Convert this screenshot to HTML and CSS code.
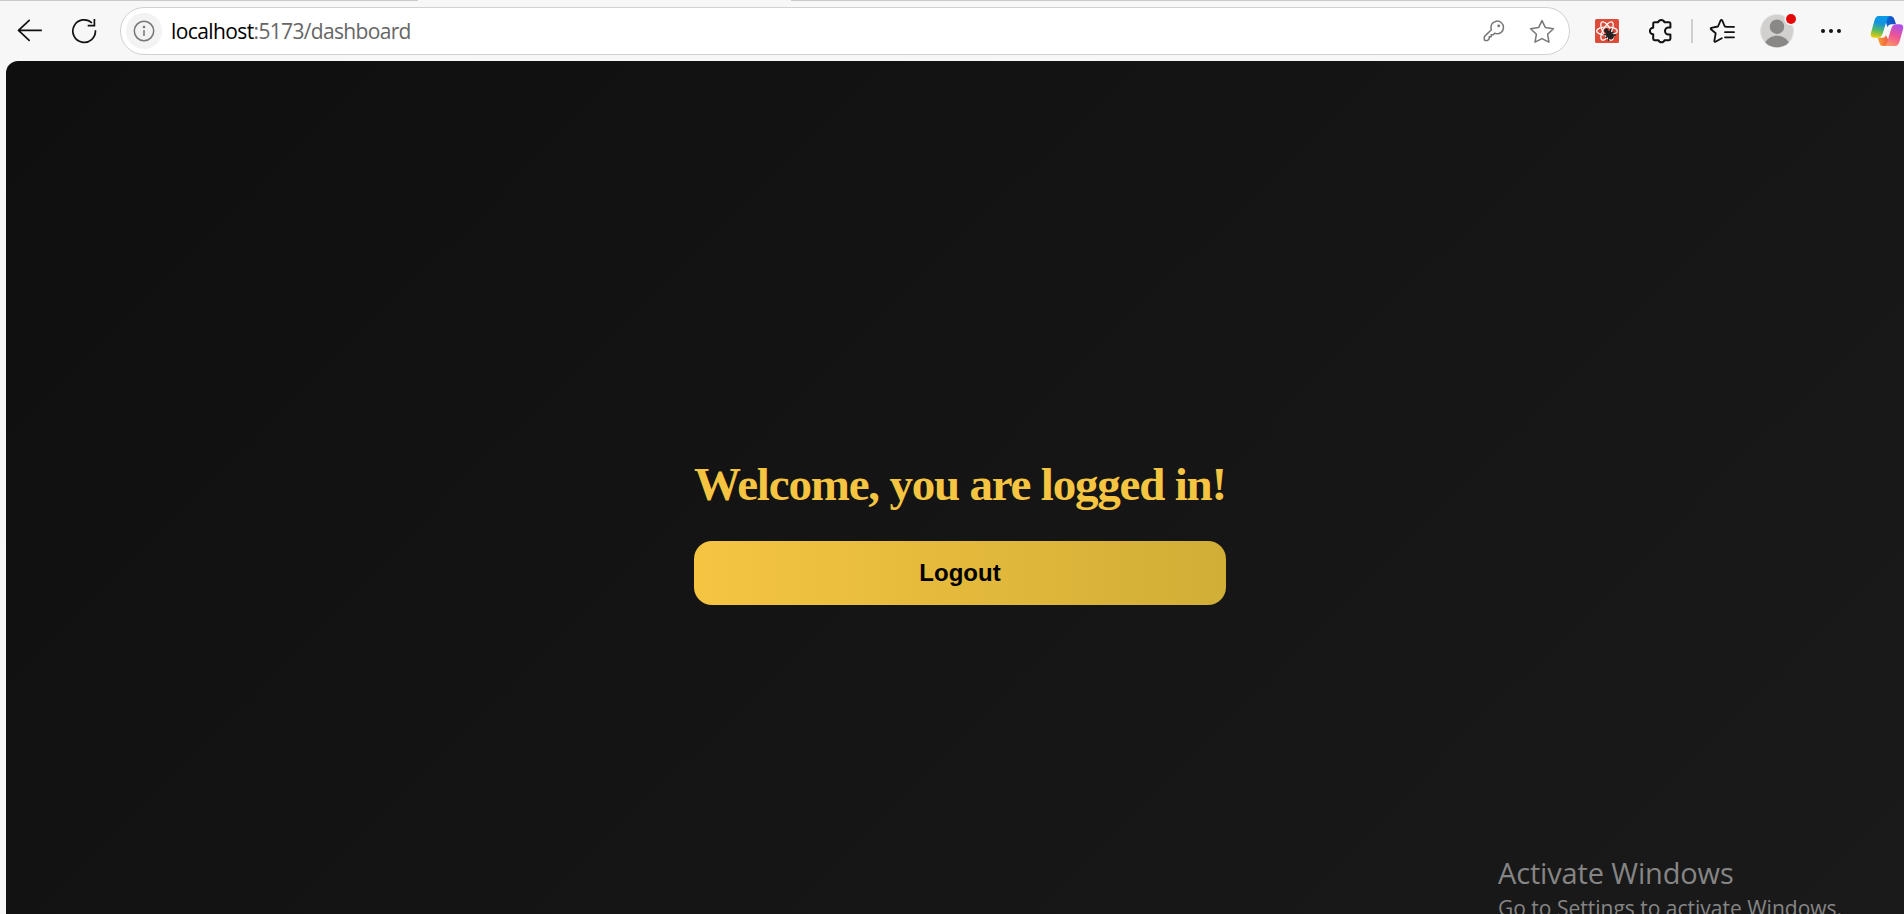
FILE: index.html
```html
<!DOCTYPE html>
<html lang="en">
<head>
<meta charset="utf-8">
<title>Dashboard</title>
<link rel="stylesheet" href="styles.css">
</head>
<body>
<header class="toolbar">
  <div class="tab-edge"><span class="edge-left"></span><span class="edge-right"></span></div>
  <div class="bar">
    <svg class="icon back" width="26" height="24" viewBox="0 0 26 24"><path d="M24.2 11.4H1.8M12.2 1.4 1.5 11.4 12.2 21.4"/></svg>
    <svg class="icon reload" width="26" height="26" viewBox="0 0 26 26"><path d="M24.4 12.2A11.3 11.3 0 1 1 21 5M23.4 1v6.7h-6.7"/></svg>
    <div class="address">
      <span class="info"><svg width="22" height="22" viewBox="0 0 22 22"><circle cx="11" cy="11" r="9.7"/><path d="M11 10v6"/><circle class="info-dot" cx="11" cy="7" r="1.3"/></svg></span>
      <span class="url"><span class="host">localhost</span><span class="path">:5173/dashboard</span></span>
      <svg class="key" width="22" height="22" viewBox="0 0 22 22"><path d="M8.1 9.1A6.3 6.3 0 1 1 13 13.6L11.6 13.3 10.2 14.7H8.2V16.7H6.2V18.7L5 20.1Q4.6 20.5 4 20.5H2.2Q1.3 20.5 1.3 19.5V17.1Q1.3 16.5 1.8 16.1L8.4 9.7Z"/><circle class="key-dot" cx="15.7" cy="5.9" r="1.4"/></svg>
      <svg class="star" width="26" height="25" viewBox="0 0 26 25"><path d="M13 1.6 16.4 8.6 24.4 9.8 18.6 15.3 20 23.2 13 19.6 6 23.2 7.4 15.3 1.6 9.8 9.6 8.6Z"/></svg>
    </div>
    <svg class="extension" width="24" height="24" viewBox="0 0 24 24">
      <rect width="24" height="24" rx="1.5" fill="#dd4b39"/>
      <g fill="none" stroke="#fff" stroke-width="1.2"><ellipse cx="12" cy="12" rx="10.3" ry="4"/><ellipse cx="12" cy="12" rx="10.3" ry="4" transform="rotate(60 12 12)"/><ellipse cx="12" cy="12" rx="10.3" ry="4" transform="rotate(120 12 12)"/></g>
      <g transform="rotate(-38 14 15)"><ellipse cx="14" cy="16.4" rx="3.2" ry="4.6" fill="#222"/><circle cx="14" cy="10.6" r="2.2" fill="#222"/><path d="M9.2 12l9.6 8M18.8 12l-9.6 8M9 16h10" stroke="#222" stroke-width="1.4"/></g>
    </svg>
    <svg class="icon puzzle" width="24" height="26" viewBox="0 0 24 26"><path d="M4.2 5.6Q4.2 4.2 5.6 4.2H9.2A3.3 3.3 0 0 1 15.4 4.2H20Q21.4 4.2 21.4 5.6V9.5H19.5A3.5 3.5 0 0 0 19.5 16.5H21.4V20.8Q21.4 22.2 20 22.2H15.6A3.3 3.3 0 0 1 9.4 22.2H5.6Q4.2 22.2 4.2 20.8V16.3A3.3 3.3 0 0 1 4.2 9.7Z"/></svg>
    <span class="divider"></span>
    <svg class="icon favorites" width="26" height="26" viewBox="0 0 26 26"><path d="M17 8.7 15.8 8.5 13.4 2.8Q12.4 1 11.4 2.8L9 8.5 2.3 9.8Q1.2 10.2 2 11.2L6.7 15.3 5.3 23Q5.4 24.2 6.5 23.7L12.8 20.2M17.7 8.9H25M16 14.2H25M16 19.3H25"/></svg>
    <div class="avatar">
      <svg width="34" height="34" viewBox="0 0 34 34"><circle cx="17" cy="17" r="16.5" fill="#d2d0ce" stroke="#e3e2e0"/><circle cx="17" cy="12.7" r="7.2" fill="#8a8886"/><path d="M5.2 28.4C10 19.4 24 19.4 28.8 28.4A16.5 16.5 0 0 1 5.2 28.4Z" fill="#8a8886"/></svg>
      <span class="alert"></span>
    </div>
    <div class="more"><i></i><i></i><i></i></div>
    <svg class="copilot" width="34" height="32" viewBox="0 0 34 32">
      <defs>
        <linearGradient id="cool" x1=".45" y1="0" x2=".25" y2="1"><stop offset="0" stop-color="#079be7"/><stop offset=".32" stop-color="#1692dc"/><stop offset=".65" stop-color="#55b966"/><stop offset="1" stop-color="#f1cd00"/></linearGradient>
        <linearGradient id="warm" x1=".7" y1="0" x2=".3" y2="1"><stop offset="0" stop-color="#a950ec"/><stop offset=".5" stop-color="#ee5495"/><stop offset="1" stop-color="#fb9565"/></linearGradient>
        <linearGradient id="fold"><stop offset="0" stop-color="#0a70de"/><stop offset="1" stop-color="#1748bd"/></linearGradient>
        <linearGradient id="fire"><stop offset="0" stop-color="#f7a32d"/><stop offset="1" stop-color="#ee4650"/></linearGradient>
      </defs>
      <path d="M14 1H20Q23.5 1 24.6 5L26 9.3H21Q18.5 9.3 17.4 12Z" fill="url(#fold)"/>
      <path d="M21 31H13Q10 31 9 26.8L7.8 22.8H13Q15.3 22.8 16 20Z" fill="url(#fire)"/>
      <path d="M8.5 1H20.5Q18.1 1 17 4.5L12.8 18.3Q11.4 22.8 7.5 22.8H4.5Q-.5 22.8 1.3 16.8L4.3 6Q5.7 1 8.5 1Z" fill="url(#cool)"/>
      <path d="M25.5 31H13Q15.9 31 17 27.5L21.2 13.7Q22.6 9.3 26.5 9.3H29.5Q34.5 9.3 32.7 15.2L29.7 26Q28.3 31 25.5 31Z" fill="url(#warm)"/>
    </svg>
  </div>
</header>
<main class="page">
  <section class="dashboard">
    <h1 class="welcome">Welcome, you are logged in!</h1>
    <button class="logout">Logout</button>
  </section>
</main>
<aside class="watermark"><div class="activate">Activate Windows</div><div class="settings">Go to Settings to activate Windows.</div></aside>
</body>
</html>
```
FILE: styles.css
```css
* { box-sizing: border-box; }
body { margin: 0; height: 914px; overflow: hidden; background: #f7f7f7; position: relative; }
.toolbar { height: 61px; }
.tab-edge { height: 1px; display: flex; justify-content: space-between; }
.edge-left { width: 418px; background: #cacaca; }
.edge-right { width: 1113px; background: #cacaca; }
.bar { height: 60px; display: flex; align-items: center; padding-left: 17px; }
.bar > * { flex: none; }
.icon { fill: none; stroke: #111; stroke-width: 1.7; stroke-linecap: round; stroke-linejoin: round; }
.reload { margin-left: 28px; stroke-linecap: butt; stroke-linejoin: miter; }
.address { width: 1450px; height: 48px; margin-left: 23px; border: 1.5px solid #d1d1d1; border-radius: 24px; background: #fff; display: flex; align-items: center; padding-left: 5px; }
.address svg { flex: none; fill: none; stroke: #777; stroke-width: 1.5; stroke-linejoin: round; }
.info { width: 36px; height: 36px; border-radius: 50%; background: #f3f3f3; display: grid; place-items: center; }
.address .info-dot, .address .key-dot { fill: #777; stroke: none; }
.url { margin-left: 9px; font: 21px/28px "Open Sans", "Noto Sans", sans-serif; white-space: nowrap; flex: 1; }
.host { color: #000; letter-spacing: -.6px; }
.path { color: #666; letter-spacing: -.67px; }
.star { margin-left: 24px; margin-right: 14px; }
.extension { margin-left: 25px; }
.puzzle { margin-left: 30px; stroke-width: 2; }
.divider { width: 2px; height: 24px; background: #cfcfcf; margin-left: 18px; }
.favorites { margin-left: 16px; stroke-width: 1.8; }
.avatar { position: relative; height: 34px; margin-left: 25px; }
.avatar svg { display: block; }
.alert { position: absolute; width: 10px; height: 10px; border-radius: 50%; background: #e30707; box-shadow: 0 0 0 1.5px #f7f7f7; left: 26px; top: 0; }
.more { display: flex; gap: 4px; margin-left: 27px; }
.more i { width: 4px; height: 4px; border-radius: 50%; background: #111; }
.copilot { margin-left: 29px; }
.page { height: 853px; margin: 0 -10px 0 6px; border-top-left-radius: 12px; background: linear-gradient(135deg, #0f0f0f, #1a1a1a); display: flex; justify-content: center; align-items: flex-start; padding-top: 393px; }
.dashboard { width: 532px; display: flex; flex-direction: column; gap: 27px; }
.welcome { margin: 0; font: bold 47px/60px "Liberation Serif", serif; color: #f5c542; white-space: nowrap; letter-spacing: -1.2px; }
.logout { height: 64px; border: 0; border-radius: 18px; background: linear-gradient(90deg, #f5c542, #d1ae36); color: #000; font: bold 24px "Liberation Sans", Arial, sans-serif; }
.watermark { position: absolute; left: 1498px; top: 853px; color: #858585; font-family: "Open Sans", "Noto Sans", sans-serif; white-space: nowrap; }
.activate { font-size: 29px; line-height: 40px; letter-spacing: -.15px; }
.settings { font-size: 21px; line-height: 30px; }
```
